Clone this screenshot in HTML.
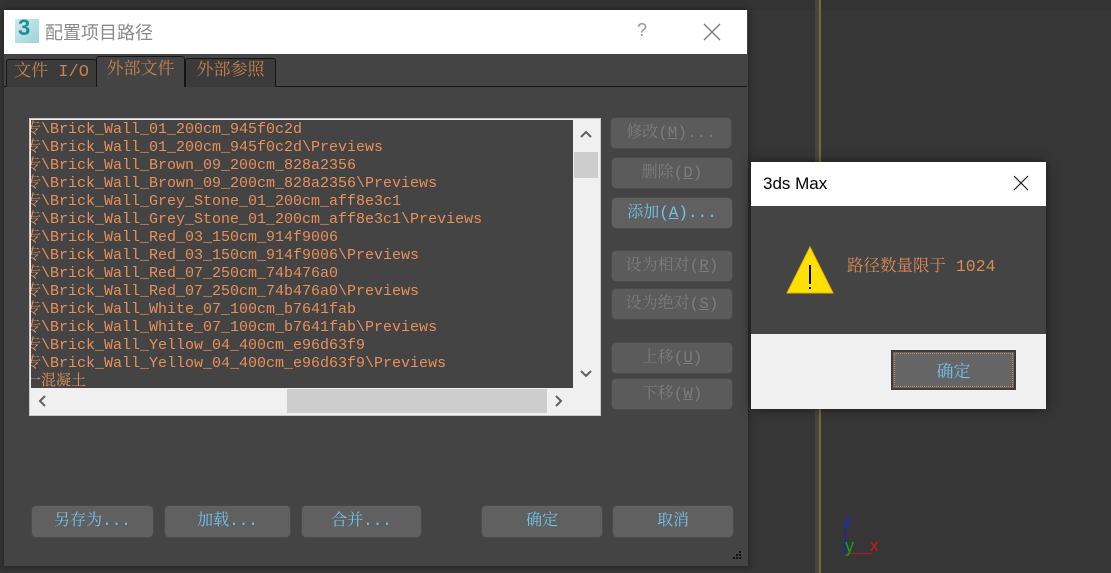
<!DOCTYPE html>
<html><head><meta charset="utf-8"><style>
*{margin:0;padding:0;box-sizing:border-box}
body{width:1111px;height:573px;background:#363636;position:relative;overflow:hidden;font-family:"Liberation Sans","Noto Sans CJK SC",sans-serif}
.a{position:absolute}
.mono{font-family:"Liberation Mono","Noto Serif CJK SC","Noto Sans CJK SC",monospace}
.btn{position:absolute;background:#5b5b5b;border-radius:4px;color:#7c7c7c;font-size:16px;text-align:center;line-height:30px;font-family:"Liberation Mono","Noto Serif CJK SC",monospace;box-shadow:0 0 0 1px #4a4a4a}
.on{color:#72c2ec;background:#606060}
.tab{position:absolute;border:1px solid #151515;border-bottom:none;border-radius:3px 3px 0 0;color:#c8824e;font-size:17px;text-align:center;font-family:"Liberation Mono","Noto Serif CJK SC",monospace}
.list div{height:18px;line-height:18px;white-space:pre;font-size:15px;color:#e8905a}
</style></head><body>
<div class="a" style="left:0;top:0;width:1111px;height:10px;background:#333"></div>
<div class="a" style="left:815px;top:0;width:4px;height:573px;background:#454545"></div>
<div class="a" style="left:819px;top:0;width:2px;height:573px;background:#7f6a26"></div>
<!-- axis -->
<div class="a" style="left:845px;top:530px;width:1px;height:24px;background:#1020d0"></div>
<div class="a" style="left:846px;top:553px;width:26px;height:1px;background:#c01818"></div>
<div class="a" style="left:843px;top:512px;color:#1828d8;font-size:17px">z</div>
<div class="a" style="left:845px;top:536px;color:#18a018;font-size:18px">y</div>
<div class="a" style="left:870px;top:536px;color:#d01818;font-size:17px">x</div>

<!-- main dialog -->
<div class="a" style="left:4px;top:10px;width:744px;height:556px;background:#444;box-shadow:0 0 6px rgba(0,0,0,.5)"></div>
<div class="a" style="left:4px;top:10px;width:743px;height:44px;background:#fff"></div>
<div class="a" style="left:15px;top:19px;width:24px;height:24px;background:linear-gradient(135deg,#cdebee,#9fd3d8);"></div>
<div class="a" style="left:18px;top:15px;font-size:22px;font-weight:bold;color:#1a8f99;font-family:'Liberation Sans',sans-serif">3</div>
<div class="a" style="left:45px;top:20px;font-size:18px;color:#8a8a8a;font-family:'Noto Sans CJK SC',sans-serif;line-height:24px">配置项目路径</div>
<div class="a" style="left:637px;top:20px;font-size:18px;color:#999">?</div>
<svg class="a" style="left:703px;top:23px" width="18" height="18"><path d="M1 1L17 17M17 1L1 17" stroke="#777" stroke-width="1.3"/></svg>

<div class="a" style="left:4px;top:86px;width:743px;height:1px;background:#161616"></div>
<div class="tab" style="left:6px;top:59px;width:91px;height:28px;background:#3b3b3b;line-height:26px">文件 I/O</div>
<div class="tab" style="left:96px;top:56px;width:89px;height:31px;background:#444;line-height:28px">外部文件</div>
<div class="tab" style="left:185px;top:58px;width:91px;height:29px;background:#3b3b3b;line-height:26px">外部参照</div>

<!-- list -->
<div class="a" style="left:29px;top:118px;width:572px;height:298px;background:#f0f0f0;border:1px solid #c8c8c8"></div>
<div class="a" style="left:31px;top:120px;width:542px;height:268px;background:#444;overflow:hidden">
<div class="list mono a" style="left:-5px;top:1px">
<div>专\Brick_Wall_01_200cm_945f0c2d</div>
<div>专\Brick_Wall_01_200cm_945f0c2d\Previews</div>
<div>专\Brick_Wall_Brown_09_200cm_828a2356</div>
<div>专\Brick_Wall_Brown_09_200cm_828a2356\Previews</div>
<div>专\Brick_Wall_Grey_Stone_01_200cm_aff8e3c1</div>
<div>专\Brick_Wall_Grey_Stone_01_200cm_aff8e3c1\Previews</div>
<div>专\Brick_Wall_Red_03_150cm_914f9006</div>
<div>专\Brick_Wall_Red_03_150cm_914f9006\Previews</div>
<div>专\Brick_Wall_Red_07_250cm_74b476a0</div>
<div>专\Brick_Wall_Red_07_250cm_74b476a0\Previews</div>
<div>专\Brick_Wall_White_07_100cm_b7641fab</div>
<div>专\Brick_Wall_White_07_100cm_b7641fab\Previews</div>
<div>专\Brick_Wall_Yellow_04_400cm_e96d63f9</div>
<div>专\Brick_Wall_Yellow_04_400cm_e96d63f9\Previews</div>
<div>一混凝土</div>
</div></div>
<div class="a" style="left:574px;top:152px;width:24px;height:26px;background:#cdcdcd"></div>
<svg class="a" style="left:580px;top:130px" width="12" height="8"><path d="M1 7L6 2L11 7" stroke="#606060" stroke-width="2" fill="none"/></svg>
<svg class="a" style="left:580px;top:370px" width="12" height="8"><path d="M1 1L6 6L11 1" stroke="#606060" stroke-width="2" fill="none"/></svg>
<div class="a" style="left:287px;top:389px;width:260px;height:24px;background:#cdcdcd"></div>
<svg class="a" style="left:38px;top:395px" width="8" height="12"><path d="M7 1L2 6L7 11" stroke="#606060" stroke-width="2" fill="none"/></svg>
<svg class="a" style="left:555px;top:395px" width="8" height="12"><path d="M1 1L6 6L1 11" stroke="#606060" stroke-width="2" fill="none"/></svg>

<!-- right buttons -->
<div class="btn" style="left:611px;top:118px;width:120px;height:30px">修改(<u>M</u>)...</div>
<div class="btn" style="left:612px;top:158px;width:120px;height:30px">删除(<u>D</u>)</div>
<div class="btn on" style="left:612px;top:198px;width:120px;height:30px">添加(<u>A</u>)...</div>
<div class="btn" style="left:612px;top:251px;width:120px;height:30px">设为相对(<u>R</u>)</div>
<div class="btn" style="left:612px;top:289px;width:120px;height:30px">设为绝对(<u>S</u>)</div>
<div class="btn" style="left:612px;top:343px;width:120px;height:30px">上移(<u>U</u>)</div>
<div class="btn" style="left:612px;top:379px;width:120px;height:30px">下移(<u>W</u>)</div>

<!-- bottom buttons -->
<div class="btn on" style="left:32px;top:506px;width:121px;height:31px;line-height:31px">另存为...</div>
<div class="btn on" style="left:165px;top:506px;width:125px;height:31px;line-height:31px">加载...</div>
<div class="btn on" style="left:302px;top:506px;width:119px;height:31px;line-height:31px">合并...</div>
<div class="btn on" style="left:482px;top:506px;width:120px;height:31px;line-height:31px">确定</div>
<div class="btn on" style="left:613px;top:506px;width:120px;height:31px;line-height:31px">取消</div>
<svg class="a" style="left:733px;top:551px" width="10" height="10"><g fill="#111"><rect x="6" y="0" width="2" height="2"/><rect x="3" y="3" width="2" height="2"/><rect x="6" y="3" width="2" height="2"/><rect x="0" y="6" width="2" height="2"/><rect x="3" y="6" width="2" height="2"/><rect x="6" y="6" width="2" height="2"/></g></svg>

<!-- message box -->
<div class="a" style="left:751px;top:162px;width:295px;height:247px;background:#f0f0f0;box-shadow:0 0 10px rgba(0,0,0,.5)"></div>
<div class="a" style="left:751px;top:162px;width:295px;height:44px;background:#fff"></div>
<div class="a" style="left:763px;top:172px;font-size:17px;color:#000;line-height:24px">3ds Max</div>
<svg class="a" style="left:1013px;top:175px" width="16" height="16"><path d="M1 1L15 15M15 1L1 15" stroke="#222" stroke-width="1.2"/></svg>
<div class="a" style="left:751px;top:206px;width:295px;height:128px;background:#444"></div>
<svg class="a" style="left:785px;top:245px" width="50" height="50"><path d="M25 2L48 48H2Z" fill="#ffe000" stroke="#e8b800"/><rect x="24" y="20" width="2" height="19" fill="#000"/><rect x="24" y="42" width="2" height="2" fill="#000"/></svg>
<div class="a" style="left:847px;top:257px;font-size:16.5px;color:#d88a56;line-height:20px;font-family:'Liberation Mono','Noto Serif CJK SC',monospace">路径数量限于 1024</div>
<div class="a" style="left:891px;top:350px;width:125px;height:40px;background:#656565;border:2px solid #3c3c3c"></div>
<div class="a" style="left:894px;top:353px;width:119px;height:34px;border:1px dotted #c08a60"></div>
<div class="a" style="left:891px;top:350px;width:125px;height:40px;line-height:40px;text-align:center;color:#72c2ec;font-size:17px;font-family:'Noto Serif CJK SC',serif">确定</div>
</body></html>
